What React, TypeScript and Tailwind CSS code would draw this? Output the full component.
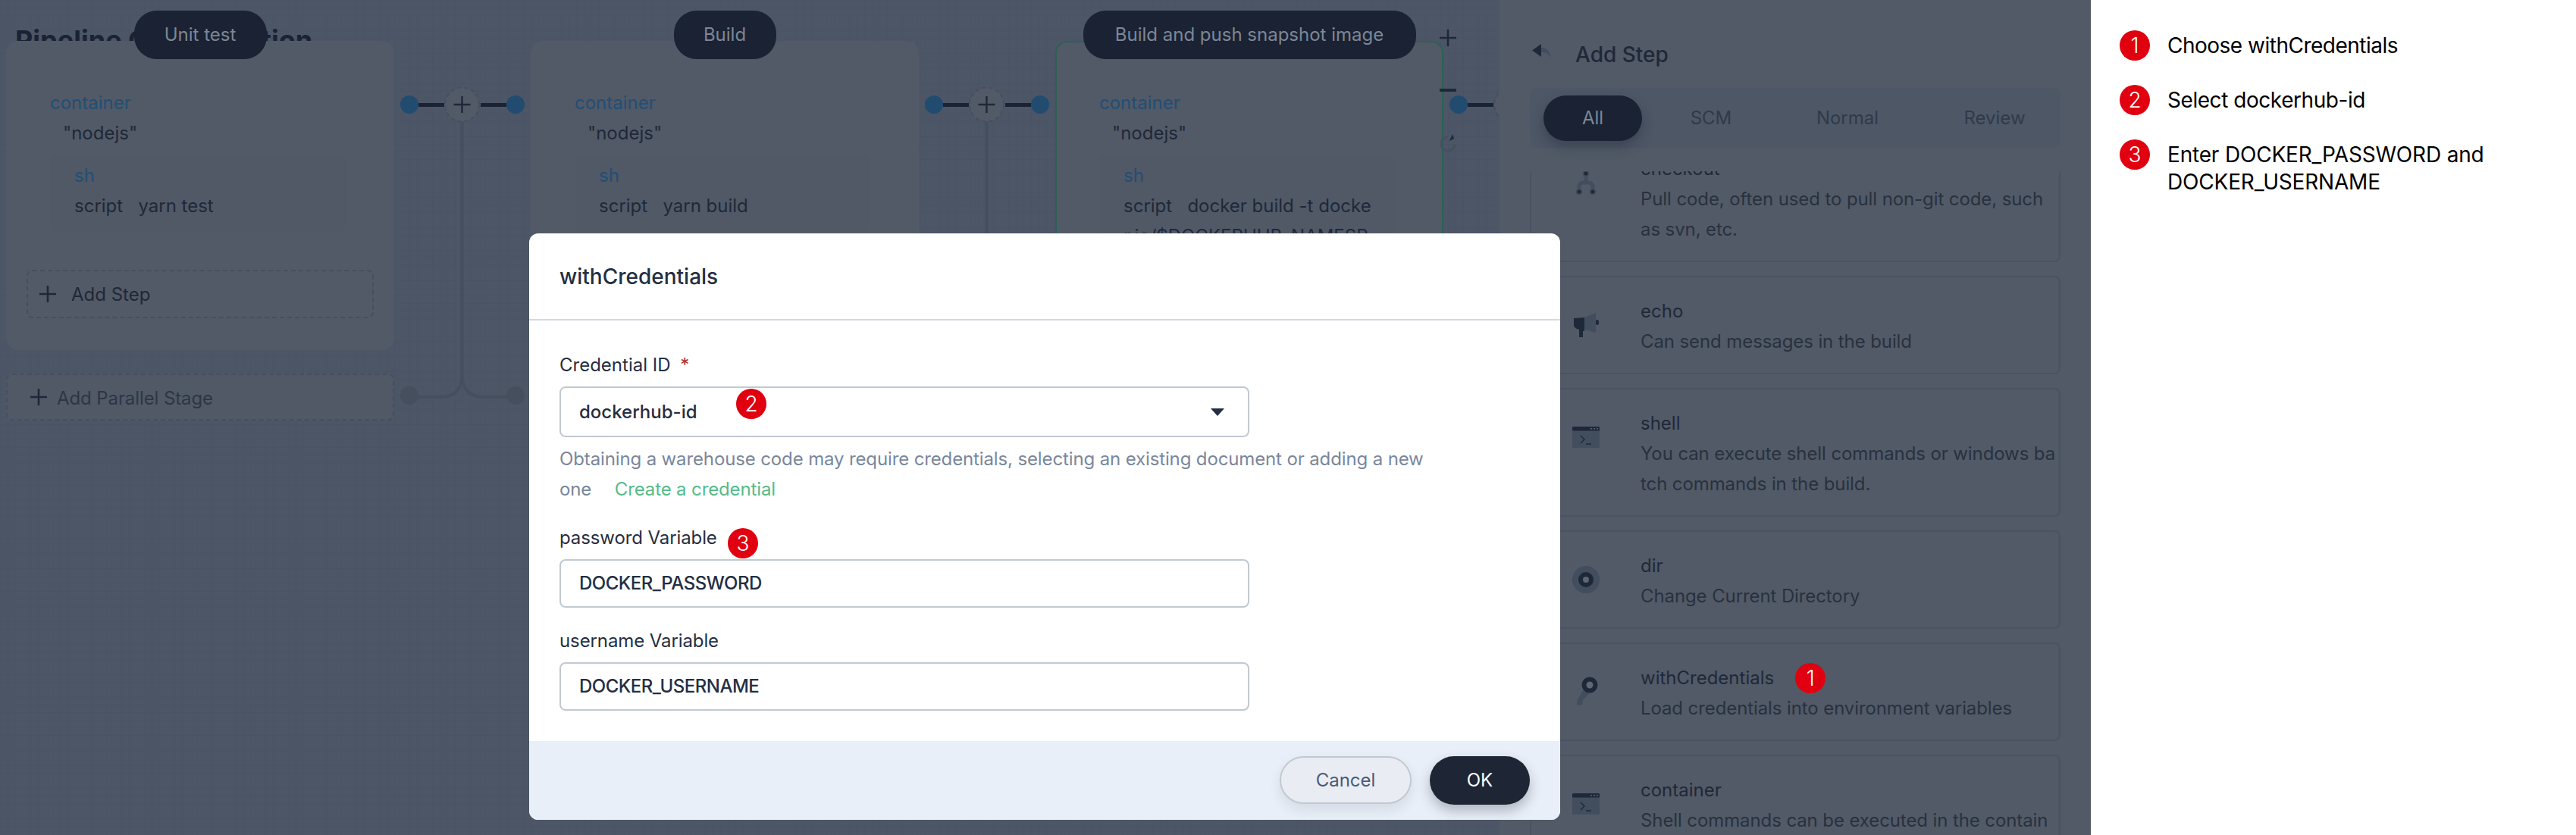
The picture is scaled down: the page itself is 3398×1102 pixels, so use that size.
import React from "react";

const FONT = "font-['Inter','Noto_Sans',sans-serif]";

function Badge({ n }: { n: number }) {
  return (
    <span className="flex h-[40px] w-[40px] shrink-0 items-center justify-center rounded-full bg-[#e0000f] text-[28px] leading-none font-light text-white">
      {n}
    </span>
  );
}

function PlusIcon({ size, color }: { size: number; color: string }) {
  return (
    <svg width={size} height={size} viewBox="0 0 22 22" className="shrink-0">
      <path d="M11 0V22M0 11H22" stroke={color} strokeWidth="2.6" />
    </svg>
  );
}

function Connector() {
  return (
    <svg width="180" height="520" viewBox="0 0 180 520" className="shrink-0">
      <path d="M89.5 107V440Q89.5 470 60 470H20" fill="none" stroke="#464f5e" strokeWidth="4" />
      <path d="M89.5 107V440Q89.5 470 119 470H160" fill="none" stroke="#464f5e" strokeWidth="4" />
      <circle cx="20" cy="468" r="12" fill="#464f5e" />
      <circle cx="160" cy="468" r="12" fill="#464f5e" />
      <rect x="32" y="82" width="34" height="5" fill="#1a2233" />
      <rect x="114" y="82" width="34" height="5" fill="#1a2233" />
      <circle cx="20" cy="84" r="12" fill="#214c70" />
      <circle cx="160" cy="84" r="12" fill="#214c70" />
      <circle cx="89.5" cy="84" r="22.5" fill="#525a67" stroke="#464f5e" strokeWidth="2" strokeDasharray="5 4" />
      <path d="M89.5 73V95M78.5 84H100.5" stroke="#1f2839" strokeWidth="2.4" />
    </svg>
  );
}

function Stage({ name, pillClass, script, active }: { name: string; pillClass: string; script: string[]; active?: boolean }) {
  return (
    <div className="relative w-[512px] shrink-0">
      <div className={active ? "relative h-[900px] rounded-[16px] border-2 border-[#2c6155] bg-[#525a67] pt-[60px]" : "relative rounded-[16px] bg-[#525a67] pt-[62px] pb-[42px]"}>
        <div className="flex justify-center">
          <div className={`absolute flex h-[64px] items-center justify-center rounded-[30px] bg-[#1a2233] text-[24px] leading-none text-[#7d8797] ${active ? "top-[-42px]" : "top-[-40px]"} ${pillClass}`}>
            {name}
          </div>
        </div>
        <div className={active ? "mx-[56px]" : "mx-[58px]"}>
          <div className="h-[40px] text-[24px] leading-[40px] text-[#234e74]">container</div>
          <div className="h-[40px] pl-[17px] text-[24px] leading-[40px] text-[#1f2839]">"nodejs"</div>
          <div className="mt-[9px] min-h-[100px] w-[390px] rounded-[8px] bg-[#515966] px-[32px] pt-[7px] text-[24px] leading-[40px] text-[#1f2839]">
            <div className="text-[#234e74]">sh</div>
            {script.map((l, i) => (
              <div key={i} className="whitespace-pre">{l}</div>
            ))}
          </div>
        </div>
        <div className={`mt-[51px] flex h-[64px] w-[458px] items-center gap-[20px] rounded-[8px] border-2 border-dashed border-[#474f5d] pl-[15px] text-[24px] text-[#1f2839] ${active ? "mx-[25px]" : "mx-[27px]"}`}>
          <PlusIcon size={22} color="#1f2839" />
          <span className="pt-[2px]">Add Step</span>
        </div>
      </div>
      {!active && (
        <div className="mt-[31px] flex h-[62px] items-center gap-[13px] rounded-[8px] border-2 border-dashed border-[#474f5d] bg-[#515966] pl-[30px] text-[24px] tracking-[-0.1px] text-[#2c3648]">
          <PlusIcon size={22} color="#1f2839" />
          <span className="pt-[3px]">Add Parallel Stage</span>
        </div>
      )}
      {active && (
        <div className="absolute top-[-15px] left-[506px] flex flex-col items-center">
          <PlusIcon size={22} color="#1f2839" />
          <svg width="22" height="4" viewBox="0 0 22 4" className="mt-[56px]"><rect width="22" height="4" fill="#1f2839" /></svg>
          <svg width="24" height="26" viewBox="0 0 24 26" className="mt-[54px]">
            <path d="M12 6A9 9 0 1 0 21 15" fill="none" stroke="#465060" strokeWidth="3" />
            <path d="M14 11L18 2L20 8Z" fill="#1f2839" />
          </svg>
        </div>
      )}
    </div>
  );
}

function CheckoutIcon() {
  return (
    <svg width="36" height="36" viewBox="0 0 36 36">
      <path d="M18 8V16M9 31V24Q9 19 14 18H22Q27 19 27 24V31" fill="none" stroke="#424d5d" strokeWidth="5" />
      <circle cx="18" cy="6" r="3.5" fill="#1f2839" stroke="#424d5d" strokeWidth="2" />
      <circle cx="9" cy="30" r="3.5" fill="#1f2839" stroke="#424d5d" strokeWidth="2" />
      <circle cx="27" cy="30" r="3.5" fill="#1f2839" stroke="#424d5d" strokeWidth="2" />
    </svg>
  );
}
function EchoIcon() {
  return (
    <svg width="36" height="36" viewBox="0 0 36 36">
      <path d="M2 9L16 8V26H14L14 34H9V24Q2 22 2 18Z" fill="#1f2839" />
      <path d="M16 8L31 2V28L16 24Z" fill="#424d5d" />
      <rect x="31" y="11" width="4" height="7" rx="2" fill="#1f2839" />
    </svg>
  );
}
function ShellIcon() {
  return (
    <svg width="36" height="36" viewBox="0 0 36 36">
      <rect x="0" y="4" width="36" height="28" rx="1.5" fill="#424d5d" />
      <path d="M0 5.5A1.5 1.5 0 0 1 1.5 4H34.5A1.5 1.5 0 0 1 36 5.5V9.5H0Z" fill="#1f2839" />
      <path d="M24 6.8H26M28 6.8H30M32 6.8H34" stroke="#5a6472" strokeWidth="1.4" />
      <path d="M11 16L16 21L11 26M18 27H25" fill="none" stroke="#1f2839" strokeWidth="1.4" />
    </svg>
  );
}
function DirIcon() {
  return (
    <svg width="36" height="36" viewBox="0 0 36 36">
      <circle cx="18" cy="18" r="18" fill="#424d5d" />
      <circle cx="18" cy="18" r="7" fill="#5f6773" stroke="#1f2839" strokeWidth="6" />
    </svg>
  );
}
function KeyIcon() {
  return (
    <svg width="36" height="36" viewBox="0 0 36 36" className="overflow-visible">
      <path d="M15 15L22 20L14 29L13 35L6 36L6 30Z" fill="#424d5d" />
      <circle cx="23" cy="9" r="7.5" fill="#5f6773" stroke="#1f2839" strokeWidth="6" />
    </svg>
  );
}

function StepCard({ icon, title, lines, badge, className = "" }: { icon: React.ReactNode; title: string; lines: string[]; badge?: number; className?: string }) {
  return (
    <div className={`flex shrink-0 gap-[54px] rounded-[8px] border-2 border-[#4a5362] pt-[25px] pb-[21px] pl-[54px] ${className}`}>
      <div className="mt-[20px] h-[36px] w-[36px] shrink-0">{icon}</div>
      <div className="text-[24px] leading-[40px]">
        <div className="flex items-center gap-[28px] text-[#1f2839]">
          <span>{title}</span>
          {badge && <Badge n={badge} />}
        </div>
        {lines.map((l) => (
          <div key={l} className="whitespace-nowrap tracking-[-0.1px] text-[#28313f]">{l}</div>
        ))}
      </div>
    </div>
  );
}

function TextInput({ value }: { value: string }) {
  return (
    <div className="mt-[8px] flex h-[64px] w-[910px] items-center rounded-[8px] border-2 border-[#c1c9d1] pl-[24px] text-[24px] font-medium tracking-[-0.5px] text-[#242e42]">
      {value}
    </div>
  );
}

export default function App() {
  return (
    <div className={`relative flex h-[1102px] w-[3398px] overflow-hidden bg-white ${FONT}`}>
      <div className="w-[1978px] shrink-0 overflow-hidden bg-[#4c5666] bg-[linear-gradient(#4a5464_1px,transparent_1px),linear-gradient(90deg,#4a5464_1px,transparent_1px)] bg-size-[10px_10px]">
        <div className="h-[54px] overflow-hidden pt-[31px] pl-[20px] text-[36px] leading-[44px] font-bold whitespace-nowrap text-[#1a2233]">
          Pipeline Configuration
        </div>
        <div className="flex pl-[8px]">
          <Stage name="Unit test" pillClass="w-[175px]" script={["script   yarn test"]} />
          <Connector />
          <Stage name="Build" pillClass="w-[135px]" script={["script   yarn build"]} />
          <Connector />
          <Stage
            name="Build and push snapshot image"
            pillClass="w-[439px]"
            active
            script={["script   docker build -t docke", "r.io/$DOCKERHUB_NAMESP"]}
          />
          <Connector />
        </div>
      </div>

      <div className="flex w-[780px] shrink-0 flex-col bg-[#525a67] px-[40px]">
        <div className="flex h-[116px] shrink-0 items-center pt-[28px]">
          <svg width="26" height="20" viewBox="0 0 26 20" className="mt-[-8px] ml-[3px] shrink-0">
            <path d="M12 5Q22 4 25 18Q20 10 12 11Z" fill="#424d5d" />
            <path d="M12 0V17L0 8.5Z" fill="#1f2839" />
          </svg>
          <span className="ml-[31px] text-[28px] font-medium text-[#1f2839]">Add Step</span>
        </div>
        <div className="flex h-[79px] shrink-0 items-center rounded-[8px] bg-[#4e5766] pl-[18px] text-[24px] text-[#2f3a4b]">
          <div className="flex h-[60px] w-[130px] shrink-0 items-center justify-center rounded-[30px] bg-[#1a2233] text-[#7d8797] shadow-[0_8px_16px_rgba(26,34,51,0.35)]">All</div>
          <div className="w-[182px] shrink-0 text-center">SCM</div>
          <div className="w-[178px] shrink-0 text-center">Normal</div>
          <div className="w-[210px] shrink-0 text-center">Review</div>
        </div>
        <div className="mt-[31px] flex min-h-0 flex-1 flex-col gap-[18px] overflow-hidden">
          <StepCard className="mt-[-50px]" icon={<CheckoutIcon />} title="checkout" lines={["Pull code, often used to pull non-git code, such", "as svn, etc."]} />
          <StepCard icon={<EchoIcon />} title="echo" lines={["Can send messages in the build"]} />
          <StepCard icon={<ShellIcon />} title="shell" lines={["You can execute shell commands or windows ba", "tch commands in the build."]} />
          <StepCard icon={<DirIcon />} title="dir" lines={["Change Current Directory"]} />
          <StepCard icon={<KeyIcon />} title="withCredentials" badge={1} lines={["Load credentials into environment variables"]} />
          <StepCard icon={<ShellIcon />} title="container" lines={["Shell commands can be executed in the contain", "er."]} />
        </div>
      </div>

      <div className="flex-1 pt-[40px] pl-[38px] text-[28px] leading-[36px] text-black">
        <div className="flex gap-[23px]">
          <Badge n={1} />
          <div className="pt-[2px] tracking-[-0.5px]">Choose withCredentials</div>
        </div>
        <div className="mt-[32px] flex gap-[23px]">
          <Badge n={2} />
          <div className="pt-[2px] tracking-[-0.45px]">Select dockerhub-id</div>
        </div>
        <div className="mt-[32px] flex gap-[23px]">
          <Badge n={3} />
          <div className="pt-[2px] tracking-[-0.18px]">
            Enter DOCKER_PASSWORD and
            <br />
            DOCKER_USERNAME
          </div>
        </div>
      </div>

      <div className="absolute top-[308px] left-[698px] flex h-[774px] w-[1360px] flex-col overflow-hidden rounded-[12px] bg-white">
        <div className="flex h-[115px] shrink-0 items-center border-b-2 border-[#d3d8e2] pl-[40px] text-[28px] font-medium text-[#242e42]">
          withCredentials
        </div>
        <div className="flex-1 px-[40px] pt-[39px] text-[24px] leading-[40px] text-[#242e42]">
          <div>
            Credential ID <span className="ml-[6px] text-[#ab2f2f]">*</span>
          </div>
          <div className="relative mt-[8px] flex h-[67px] w-[910px] items-center rounded-[8px] border-2 border-[#c1c9d1] pl-[24px] font-medium">
            dockerhub-id
            <div className="absolute top-[1px] left-[231px]">
              <Badge n={2} />
            </div>
            <svg width="18" height="10" viewBox="0 0 18 10" className="absolute top-[27px] right-[31px]">
              <path d="M0 0H18L9 10Z" fill="#242e42" />
            </svg>
          </div>
          <div className="mt-[9px] whitespace-nowrap tracking-[-0.13px] text-[#79879c]">
            Obtaining a warehouse code may require credentials, selecting an existing document or adding a new
            <br />
            one <span className="ml-[24px] text-[#55bc8a]">Create a credential</span>
          </div>
          <div className="relative mt-[24px] tracking-[-0.1px]">
            password Variable
            <div className="absolute top-[7px] left-[222px]">
              <Badge n={3} />
            </div>
          </div>
          <TextInput value="DOCKER_PASSWORD" />
          <div className="mt-[24px] tracking-[-0.1px]">username Variable</div>
          <TextInput value="DOCKER_USERNAME" />
        </div>
        <div className="flex h-[104px] shrink-0 items-start justify-end gap-[24px] bg-[#e9eff8] pt-[20px] pr-[40px] text-[24px]">
          <div className="flex h-[63px] w-[174px] items-center justify-center rounded-[32px] border-2 border-[#c1c9d1] bg-[#e9edf3] text-[#4a5a78] shadow-[0_8px_16px_rgba(35,45,65,0.1)]">Cancel</div>
          <div className="flex h-[64px] w-[132px] items-center justify-center rounded-[32px] bg-[#1e2535] text-white shadow-[0_8px_16px_rgba(35,45,65,0.3)]">OK</div>
        </div>
      </div>
    </div>
  );
}
